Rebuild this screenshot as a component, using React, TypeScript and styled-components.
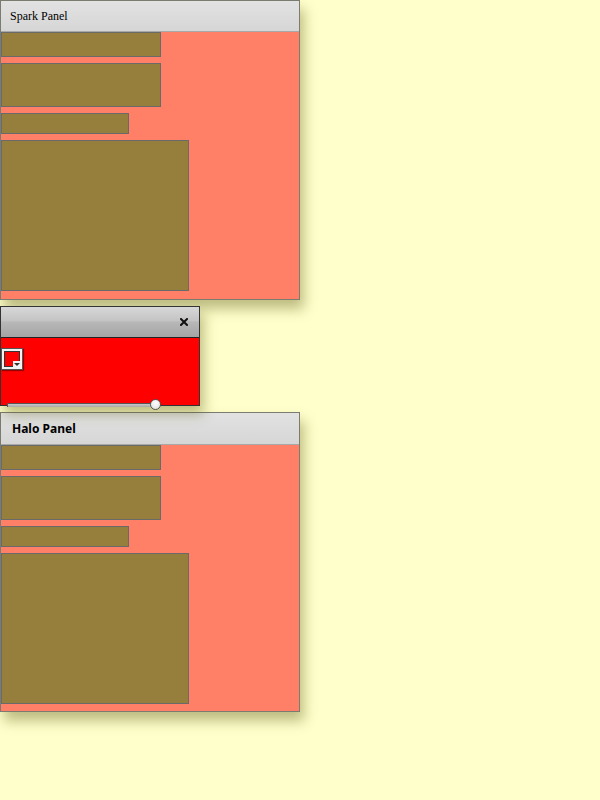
import React from "react";
import styled, { createGlobalStyle } from "styled-components";

const Global = createGlobalStyle`
  html, body { margin: 0; padding: 0; background: #ffffcc; }
  body { width: 600px; height: 800px; overflow: hidden; }
`;

const Page = styled.div`
  display: flex;
  flex-direction: column;
  align-items: flex-start;
  gap: 6px;
`;

const Panel = styled.div`
  width: 300px;
  height: 300px;
  box-sizing: border-box;
  border: 1px solid #7b7b70;
  background: #ff8066;
  display: flex;
  flex-direction: column;
  box-shadow: 4px 9px 12px rgba(90, 90, 20, 0.4);
  position: relative;
  z-index: 1;
`;

const PanelHeader = styled.div<{ $halo?: boolean }>`
  height: ${(p) => (p.$halo ? 31 : 30)}px;
  flex: none;
  border-bottom: 1px solid #a8a8a8;
  background: linear-gradient(#e2e2e2, #d6d6d6);
  display: flex;
  align-items: center;
  padding-left: ${(p) => (p.$halo ? 11 : 9)}px;
  font-family: ${(p) =>
    p.$halo ? '"Noto Sans", "Open Sans", sans-serif' : '"Liberation Serif", "Times New Roman", serif'};
  font-size: 12px;
  font-weight: ${(p) => (p.$halo ? 700 : 400)};
  color: #000;
`;

const Body = styled.div`
  display: flex;
  flex-direction: column;
  align-items: flex-start;
  gap: 6px;
`;

const Box = styled.div<{ $w: number; $h: number }>`
  width: ${(p) => p.$w}px;
  height: ${(p) => p.$h}px;
  box-sizing: border-box;
  border: 1px solid #6a6a6a;
  background: #967f3c;
`;

const Win = styled.div`
  width: 200px;
  height: 100px;
  box-sizing: border-box;
  border: 1px solid #333;
  background: #ff0000;
  display: flex;
  flex-direction: column;
  box-shadow: 4px 8px 12px rgba(90, 90, 20, 0.4);
  position: relative;
  z-index: 2;
`;

const WinHeader = styled.div`
  height: 30px;
  flex: none;
  border-bottom: 1px solid #222;
  background: linear-gradient(#d8d8d8 0%, #c4c4c4 45%, #b8b8b8 50%, #a4a4a4 100%);
  display: flex;
  align-items: center;
  justify-content: flex-end;
  padding-right: 11px;
`;

const Close = styled.svg`
  width: 8px;
  height: 8px;
`;

const WinBody = styled.div`
  flex: 1;
  position: relative;
  padding-top: 10px;
`;

const Swatch = styled.div`
  width: 22px;
  height: 22px;
  box-sizing: border-box;
  background: #f2f2f2;
  border: 1px solid #555;
  box-shadow: 1px 1px 1px rgba(0, 0, 0, 0.4);
  padding: 2px;
  position: relative;
`;

const SwatchColor = styled.div`
  width: 100%;
  height: 100%;
  box-sizing: border-box;
  background: #ff0000;
  border: 1px solid #333;
`;

const Notch = styled.div`
  position: absolute;
  right: 1px;
  bottom: 1px;
  width: 8px;
  height: 7px;
  background: #f2f2f2;
  display: flex;
  align-items: center;
  justify-content: center;
  &::after {
    content: "";
    border-left: 3px solid transparent;
    border-right: 3px solid transparent;
    border-top: 3px solid #333;
  }
`;

const Track = styled.div`
  position: absolute;
  left: 6px;
  bottom: -2px;
  width: 152px;
  height: 4px;
  box-sizing: border-box;
  border: 1px solid #555;
  border-bottom: none;
  background: linear-gradient(#c8c8c8, #a8a8a8);
`;

const Thumb = styled.div`
  position: absolute;
  left: 149px;
  bottom: -5px;
  width: 11px;
  height: 11px;
  box-sizing: border-box;
  border-radius: 50%;
  border: 1px solid #555;
  background: radial-gradient(circle at 50% 35%, #ffffff, #dcdcdc);
`;

const boxes = [
  { w: 160, h: 25 },
  { w: 160, h: 44 },
  { w: 128, h: 21 },
  { w: 188, h: 151 },
];

function BoxPanel({ title, halo }: { title: string; halo?: boolean }) {
  return (
    <Panel>
      <PanelHeader $halo={halo}>{title}</PanelHeader>
      <Body>
        {boxes.map((b, i) => (
          <Box key={i} $w={b.w} $h={b.h} />
        ))}
      </Body>
    </Panel>
  );
}

export default function App() {
  return (
    <Page>
      <Global />
      <BoxPanel title="Spark Panel" />
      <Win>
        <WinHeader>
          <Close viewBox="0 0 8 8">
            <path d="M1 1 L7 7 M7 1 L1 7" stroke="#111" strokeWidth="2" strokeLinecap="square" />
          </Close>
        </WinHeader>
        <WinBody>
          <Swatch>
            <SwatchColor />
            <Notch />
          </Swatch>
          <Track />
          <Thumb />
        </WinBody>
      </Win>
      <BoxPanel title="Halo Panel" halo />
    </Page>
  );
}
